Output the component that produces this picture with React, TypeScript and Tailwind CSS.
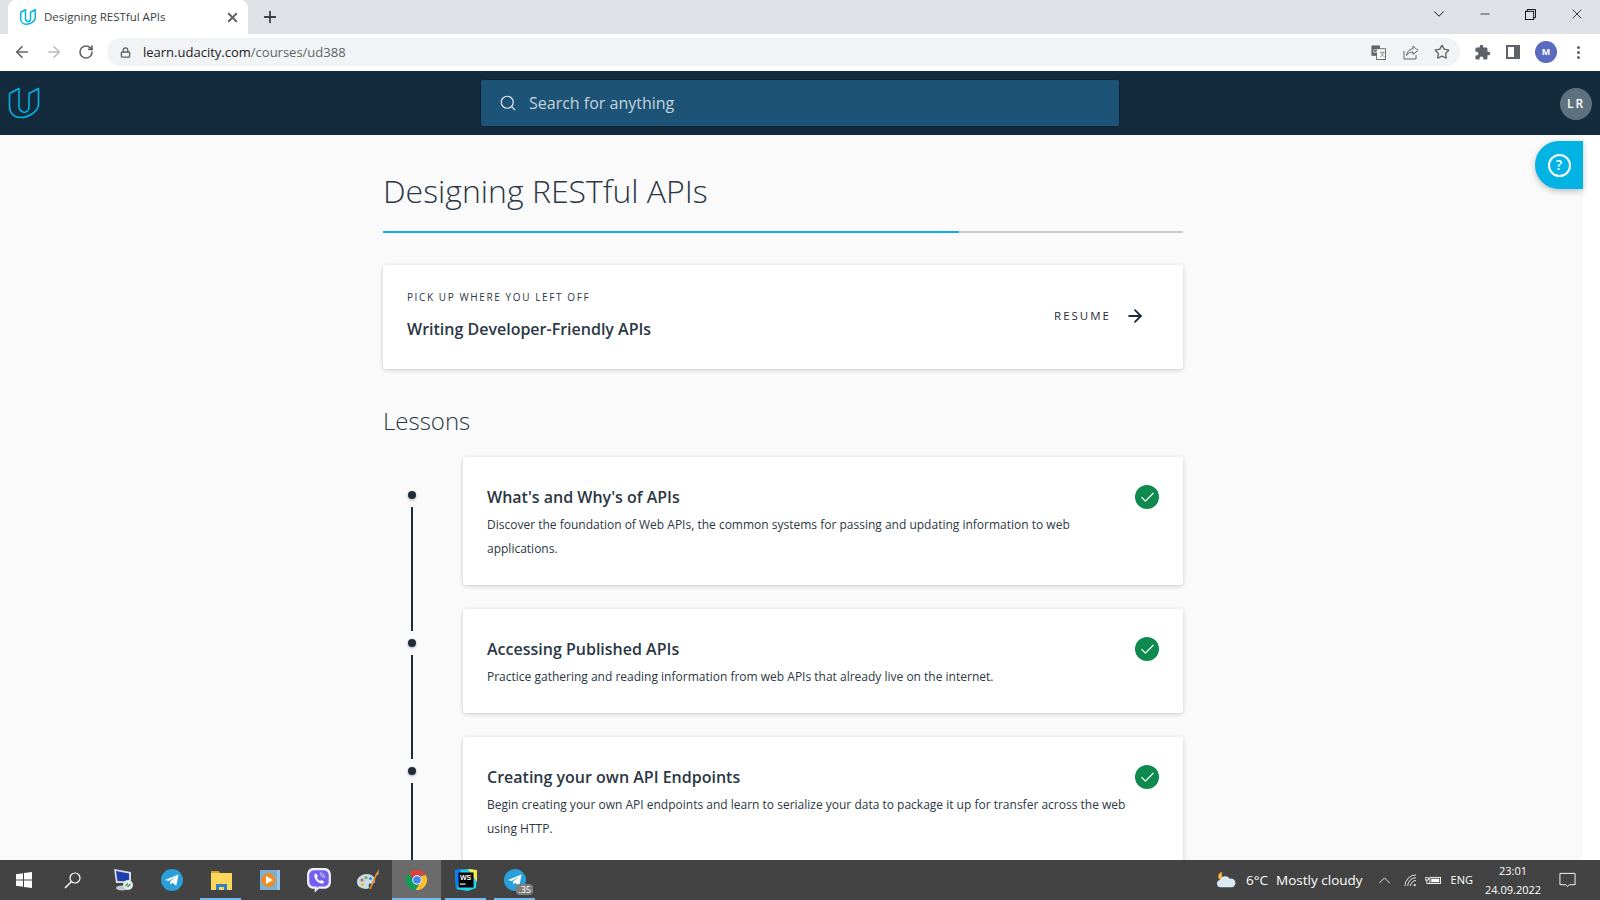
import { ArrowLeft, ArrowRight, Check, ChevronDown, Lock, Minus, Plus, RotateCw, Search, Star, X } from "lucide-react";
import type { ReactNode } from "react";

const lessons = [
  {
    title: "What's and Why's of APIs",
    text: "Discover the foundation of Web APIs, the common systems for passing and updating information to web applications.",
  },
  {
    title: "Accessing Published APIs",
    text: "Practice gathering and reading information from web APIs that already live on the internet.",
  },
  {
    title: "Creating your own API Endpoints",
    text: "Begin creating your own API endpoints and learn to serialize your data to package it up for transfer across the web using HTTP.",
  },
];

function UdacityLogo({ className, strokeWidth = 1.6 }: { className: string; strokeWidth?: number }) {
  return (
    <svg viewBox="0 0 32 32" fill="none" stroke="#02b3e4" strokeWidth={strokeWidth} strokeLinejoin="round" className={className}>
      <path d="M1.5 6.5 L11 1.5 V19 C11 22.5 13 24.5 16 25.5" />
      <path d="M1.5 6.5 V20 C1.5 26 6 30.5 12.5 30.5 C20 30.5 30.5 25 30.5 17 V1.5 L21 6.5 V20 C21 23 19 25 16 25.5" />
    </svg>
  );
}

function TelegramIcon({ className }: { className: string }) {
  return (
    <svg viewBox="0 0 24 24" className={className}>
      <circle cx="12" cy="12" r="11" fill="#2a9fd9" />
      <path d="M5 12 L18.5 6.5 L16.3 17.8 L12.3 14.8 L10.5 16.6 L10 13.5 L15.6 9 L8.6 13.1 Z" fill="#fff" />
    </svg>
  );
}

function TaskCell({ children, active, underline }: { children: ReactNode; active?: boolean; underline?: boolean }) {
  return (
    <div className={`relative flex h-10 w-[49px] items-center justify-center ${active ? "bg-[#6b6b6b]" : ""}`}>
      {children}
      {underline && <span className="absolute bottom-0 left-1 right-1 h-0.5 bg-[#76b9ed]" />}
      {active && <span className="absolute bottom-0 left-0 right-0 h-0.5 bg-[#76b9ed]" />}
    </div>
  );
}

function Tabstrip() {
  return (
    <div className="flex h-[34px] items-end bg-[#dee1e6] pl-2 text-[#3c4043]">
      <div className="flex h-[34px] w-[240px] items-center rounded-t-lg bg-white pl-[12px] pr-2">
        <UdacityLogo className="h-4 w-4" strokeWidth={3} />
        <span className="ml-[8px] flex-1 text-[11.5px]">Designing RESTful APIs</span>
        <X size={15} strokeWidth={3} className="text-[#5f6368]" />
      </div>
      <div className="ml-2 flex h-[34px] w-7 items-center justify-center">
        <Plus size={18} strokeWidth={2.4} />
      </div>
      <div className="ml-auto flex h-[34px] items-center pb-[6px] text-black">
        <ChevronDown size={18} strokeWidth={1.2} className="mr-[30px]" />
        <Minus size={14} strokeWidth={1.2} className="mr-[33px]" />
        <svg viewBox="0 0 12 12" fill="none" stroke="currentColor" className="mr-[33px] h-[11px] w-[11px]">
          <rect x="0.5" y="2.5" width="9" height="9" />
          <path d="M2.5 2.5 V0.5 H11.5 V9.5 H9.5" />
        </svg>
        <X size={16} strokeWidth={1.1} className="mr-[15px]" />
      </div>
    </div>
  );
}

function Toolbar() {
  return (
    <div className="flex h-[37px] items-center bg-white pb-px text-[#5f6368]">
      <ArrowLeft size={18} strokeWidth={2.2} className="ml-[13px]" />
      <ArrowRight size={18} strokeWidth={2.2} className="ml-[14px] text-[#babcbe]" />
      <RotateCw size={16} strokeWidth={2.4} className="ml-[15px]" />
      <div className="ml-[13px] flex h-7 w-[1353px] items-center rounded-full bg-[#f1f3f4]">
        <Lock size={11} strokeWidth={3} className="ml-[13px]" />
        <span className="ml-[12px] text-[13px] leading-none">
          <span className="text-[#202124]">learn.udacity.com</span>/courses/ud388
        </span>
        <div className="ml-auto flex items-center">
          <svg viewBox="0 0 16 16" className="h-[15px] w-[15px]">
            <rect x="0.5" y="0.5" width="9" height="11" fill="#5f6368" />
            <rect x="6" y="4" width="9.5" height="11.5" fill="#fff" stroke="#5f6368" />
            <text x="2" y="8" fontSize="6" fill="#fff" fontFamily="Liberation Sans, sans-serif">G</text>
            <text x="9" y="12" fontSize="6" fill="#5f6368" fontFamily="Noto Sans CJK SC, sans-serif">文</text>
          </svg>
          <svg viewBox="0 0 16 16" fill="none" stroke="#5f6368" strokeWidth="1" className="ml-[17px] h-4 w-4">
            <path d="M1 7 V15 H13 V11" />
            <path d="M10 2 L15 6.5 L10 10.5 V8 C7 8 5 9 3.5 11.5 C4 7.5 6.5 5 10 4.7 Z" />
          </svg>
          <Star size={16} strokeWidth={2} className="ml-[15px] mr-[10px]" />
        </div>
      </div>
      <svg viewBox="0 0 24 24" className="ml-[14px] h-[17px] w-[17px]" fill="#5f6368">
        <path d="M20.5 11H19V7c0-1.1-.9-2-2-2h-4V3.5a2.5 2.5 0 0 0-5 0V5H4c-1.1 0-2 .9-2 2v3.8h1.5a2.7 2.7 0 0 1 0 5.4H2V20c0 1.1.9 2 2 2h3.8v-1.5a2.7 2.7 0 0 1 5.4 0V22H17c1.1 0 2-.9 2-2v-4h1.5a2.5 2.5 0 0 0 0-5z" />
      </svg>
      <div className="ml-[15px] flex h-3.5 w-3.5 justify-start border-2 border-[#5f6368] bg-white">
        <span className="ml-auto h-full w-1 bg-[#5f6368]" />
      </div>
      <div className="ml-[15px] flex h-[22px] w-[22px] items-center justify-center rounded-full bg-[#5c6bc0] text-[9px] font-bold text-white">
        M
      </div>
      <div className="ml-[20px] flex flex-col gap-[2px]">
        <span className="h-[3px] w-[3px] rounded-full bg-[#5f6368]" />
        <span className="h-[3px] w-[3px] rounded-full bg-[#5f6368]" />
        <span className="h-[3px] w-[3px] rounded-full bg-[#5f6368]" />
      </div>
    </div>
  );
}

function Navbar() {
  return (
    <header className="relative flex h-[64px] items-center border-t border-[#0f2a3d] bg-[#142b3d]">
      <UdacityLogo className="mb-0.5 ml-2 h-[32px] w-[32px]" />
      <div className="mb-0.5 ml-[440px] flex h-12 w-[640px] items-center rounded-[3px] border border-[#0d2233] bg-[#1c5376] pl-[18px] text-white">
        <Search size={18} strokeWidth={1.6} className="text-[#dfe8ee]" />
        <span className="ml-[12px] text-base text-[#c5d3dc]">Search for anything</span>
      </div>
      <div className="ml-auto mr-2 flex h-8 w-8 items-center justify-center rounded-full bg-[#5f7180] text-xs font-semibold tracking-[2px] text-white">
        LR
      </div>
    </header>
  );
}

function LessonRow({ title, text, index, last }: { title: string; text: string; index: number; last: boolean }) {
  return (
    <div className="flex">
      <div className={`flex w-[80px] flex-col items-center pr-[22px] ${index === 0 ? "pt-[34px]" : "pt-[30px]"}`}>
        <span className="mb-1 h-2 w-2 shrink-0 rounded-full bg-[#1f2b38] shadow-[0_1px_3px_rgba(0,0,0,0.3)]" />
        <span className={`mt-1 w-0.5 flex-1 bg-[#1f2b38] ${last ? "min-h-[100px]" : "-mb-[46px]"}`} />
      </div>
      <div className="flex-1 rounded-[3px] bg-white pb-[24px] pl-6 pr-6 pt-[27px] shadow-[0_1px_4px_rgba(20,30,40,0.22)]">
        <div className="flex items-start justify-between">
          <h3 className="text-base font-semibold leading-[26px] text-[#2b3744]">{title}</h3>
          <span className="mt-px flex h-6 w-6 items-center justify-center rounded-full bg-[#0f8a4f]">
            <Check size={17} strokeWidth={1.6} className="text-white" />
          </span>
        </div>
        <p className="mt-[3px] w-[640px] text-xs leading-6 text-[#2b3744]">{text}</p>
      </div>
    </div>
  );
}

function Taskbar() {
  return (
    <footer className="flex h-10 shrink-0 items-center bg-[#434343] text-white">
      <div className="flex h-10 w-12 items-center justify-center">
        <svg viewBox="0 0 16 16" className="h-4 w-4" fill="#fff">
          <path d="M0 2.3 L7 1.3 V7.6 H0 Z M8 1.1 L16 0 V7.6 H8 Z M0 8.4 H7 V14.7 L0 13.7 Z M8 8.4 H16 V16 L8 14.9 Z" />
        </svg>
      </div>
      <div className="mr-0.5 flex h-10 w-12 items-center justify-center">
        <svg viewBox="0 0 17 17" fill="none" stroke="#fff" strokeWidth="1.2" className="h-[17px] w-[17px]">
          <circle cx="11" cy="6" r="5" />
          <path d="M7.5 9.5 L1 16" strokeWidth="1.5" />
        </svg>
      </div>
      <TaskCell>
        <svg viewBox="0 0 24 24" className="h-6 w-6">
          <path d="M3 1 L20 4 V15 L5 15 Z" fill="#d7dde3" />
          <path d="M5 3 L18 5.5 V13.5 L6.5 13 Z" fill="#1e3fb0" />
          <ellipse cx="11" cy="20" rx="6" ry="2.5" fill="#c4c8cc" />
          <circle cx="17" cy="17" r="5" fill="#e8ecee" />
          <path d="M14.5 18 L17 15.5 M16.5 19 L19.5 16" stroke="#2a9a3a" strokeWidth="1.2" />
        </svg>
      </TaskCell>
      <TaskCell>
        <TelegramIcon className="h-6 w-6" />
      </TaskCell>
      <TaskCell underline>
        <svg viewBox="0 0 24 24" className="h-6 w-6">
          <path d="M2 3 H10 L11 5 H2 Z" fill="#d9a520" />
          <rect x="2" y="5" width="21" height="17" fill="#fbd75b" />
          <path d="M7 22 V16 H18 V22 H15 V19 H10 V22 Z" fill="#2f80c8" />
        </svg>
      </TaskCell>
      <TaskCell>
        <svg viewBox="0 0 24 24" className="h-6 w-6">
          <rect x="2" y="2" width="20" height="20" fill="#7db1d3" />
          <rect x="19" y="2" width="3" height="20" fill="#9cc6e0" />
          <circle cx="10.5" cy="12" r="7" fill="#f08a24" />
          <path d="M8 8 L15 12 L8 16 Z" fill="#fff" />
        </svg>
      </TaskCell>
      <TaskCell>
        <svg viewBox="0 0 24 24" className="h-[26px] w-[26px]">
          <path d="M7 1 H17 C20.5 1 23 3.5 23 7 V14 C23 17.5 20.5 20 17 20 H12 L8 23.5 V20 H7 C3.5 20 1 17.5 1 14 V7 C1 3.5 3.5 1 7 1 Z" fill="#f2eefb" />
          <path d="M7.5 3 H16.5 C19 3 21 5 21 7.5 V13.5 C21 16 19 18 16.5 18 H11.5 L10 19.5 V18 H7.5 C5 18 3 16 3 13.5 V7.5 C3 5 5 3 7.5 3 Z" fill="#7360f2" />
          <path d="M8 6.5 L9.5 6 L11 8.5 L10 9.8 C10.5 11 11.5 12.2 13 13 L14.3 12 L16.8 13.5 L16 15 C14 15.8 11 14.5 9.3 12.3 C7.8 10.3 7.3 8 8 6.5 Z" fill="#fff" />
          <path d="M13 5.5 C15.5 5.7 17.2 7.5 17.3 10 M13 7.3 C14.5 7.5 15.4 8.4 15.5 10" stroke="#fff" strokeWidth="0.7" fill="none" />
        </svg>
      </TaskCell>
      <TaskCell>
        <svg viewBox="0 0 24 24" className="h-6 w-6">
          <path d="M1 14 C1 9 6 6 11 6 C16 6 19 9 19 13 C19 16 16 16 14.5 15.5 C12.5 15 12.5 18 13 19 C13.5 21 10 21.5 7 20.5 C3.5 19.5 1 17.5 1 14 Z" fill="#c5dcea" />
          <circle cx="6" cy="12" r="1.6" fill="#e2574c" />
          <circle cx="10" cy="9.5" r="1.6" fill="#5cb85c" />
          <circle cx="14.5" cy="10.5" r="1.5" fill="#3f8fd2" />
          <circle cx="6.5" cy="16.5" r="1.6" fill="#f1c40f" />
          <path d="M14 21 L21 5" stroke="#e8862a" strokeWidth="1.8" />
          <path d="M20 6 L23 1 L22.5 7 Z" fill="#c9a36a" />
        </svg>
      </TaskCell>
      <TaskCell active>
        <svg viewBox="0 0 24 24" className="h-[22px] w-[22px]">
          <path d="M12 1 A11 11 0 0 1 21.5 6.5 H12 A5.5 5.5 0 0 0 6.8 10.2 L3 4 A11 11 0 0 1 12 1 Z" fill="#db4437" />
          <path d="M3 4 L7.8 12.5 A5.5 5.5 0 0 0 13.5 17.3 L10.5 22.9 A11 11 0 0 1 3 4 Z" fill="#0f9d58" />
          <path d="M21.5 6.5 A11 11 0 0 1 10.5 22.9 L15.5 15 A5.5 5.5 0 0 0 16 8 Z" fill="#fbc02d" />
          <circle cx="12" cy="12" r="5.2" fill="#fff" />
          <circle cx="12" cy="12" r="4.2" fill="#4285f4" />
        </svg>
      </TaskCell>
      <TaskCell underline>
        <svg viewBox="0 0 24 24" className="h-6 w-6">
          <path d="M1 2 L18 1 L23 6 L22 20 L14 23 L2 21 Z" fill="#21d4f0" />
          <path d="M14 1 L23 2 L23 14 Z" fill="#f3ec50" />
          <path d="M1 2 L7 1 L3 21 L2 21 Z" fill="#087cfa" />
          <rect x="4.5" y="4.5" width="15" height="15" fill="#000" />
          <text x="6" y="11.5" fontSize="7" fontWeight="700" fill="#fff" fontFamily="Liberation Sans, sans-serif">WS</text>
          <rect x="6" y="15.5" width="5.5" height="1.2" fill="#fff" />
        </svg>
      </TaskCell>
      <TaskCell underline>
        <TelegramIcon className="h-6 w-6" />
        <span className="absolute bottom-[5px] right-[6px] rounded-sm bg-[#7d7d7d] px-[2px] text-[9px] leading-[11px] text-white">.35</span>
      </TaskCell>
      <div className="ml-auto flex items-center">
        <svg viewBox="0 0 24 20" className="h-[18px] w-[22px]">
          <path d="M8 1 A5 5 0 1 0 13 8 A4.5 4.5 0 0 1 8 1 Z" fill="#f6b73c" />
          <path d="M6 18 A4 4 0 0 1 6 10 A5.5 5.5 0 0 1 16 8.5 A4.8 4.8 0 0 1 19 18 Z" fill="#dbe9f4" />
        </svg>
        <span className="ml-[9px] pt-px text-[13.5px]">6°C</span>
        <span className="ml-2 pt-px text-[13.5px]">Mostly cloudy</span>
        <svg viewBox="0 0 14 8" fill="none" stroke="#fff" strokeWidth="1" className="ml-[15px] h-[7px] w-[13px]">
          <path d="M1 7 L7 1 L13 7" />
        </svg>
        <svg viewBox="0 0 14 14" fill="none" stroke="#eee" strokeWidth="1" className="ml-[13px] h-[13px] w-[13px]">
          <path d="M1 13 A12 12 0 0 1 13 1 M4 13 A9 9 0 0 1 13 4 M7 13 A6 6 0 0 1 13 7" />
          <circle cx="11.5" cy="12" r="1.2" fill="#eee" stroke="none" />
        </svg>
        <svg viewBox="0 0 18 12" fill="none" stroke="#fff" strokeWidth="1" className="ml-2 h-[12px] w-[16px]">
          <rect x="5.5" y="3" width="12" height="7" />
          <rect x="7" y="4.5" width="9" height="4" fill="#fff" stroke="none" />
          <path d="M0 3.5 H4 V6 H0 Z M2 6 V10 H6" />
        </svg>
        <span className="ml-[10px] text-[11px]">ENG</span>
        <div className="ml-[12px] flex w-[56px] flex-col items-center text-[11px] leading-[19px]">
          <span>23:01</span>
          <span>24.09.2022</span>
        </div>
        <svg viewBox="0 0 18 16" fill="none" stroke="#fff" strokeWidth="1" className="ml-[18px] mr-[24px] h-4 w-[17px]">
          <path d="M1 1 H17 V13 H11 L9 15 L7 13 H1 Z" />
        </svg>
      </div>
    </footer>
  );
}

export default function App() {
  return (
    <div className="flex h-[900px] flex-col overflow-hidden bg-white font-['Open_Sans',sans-serif]">
      <Tabstrip />
      <Toolbar />
      <Navbar />
      <div className="relative flex min-h-0 flex-1 overflow-hidden">
        <main className="w-[1583px] bg-[#fafafa] pl-[383px]">
          <div className="w-[800px]">
            <h1 className="mt-[34px] text-[32px] font-light leading-[44px] text-[#2b3744]">Designing RESTful APIs</h1>
            <div className="mt-[18px] flex h-0.5 bg-[#c8cdd2]">
              <span className="h-full w-[576px] bg-[#02b3e4]" />
            </div>
            <section className="mt-8 flex h-[104px] items-center justify-between rounded-[3px] bg-white pl-6 pr-[38px] shadow-[0_1px_4px_rgba(20,30,40,0.22)]">
              <div className="pb-[5px]">
                <p className="text-[10px] font-medium uppercase leading-4 tracking-[1.6px] text-[#2b3744]">Pick up where you left off</p>
                <p className="mt-3 text-base font-semibold leading-6 text-[#2b3744]">Writing Developer-Friendly APIs</p>
              </div>
              <div className="flex items-center pb-[2px] text-[#1f2b38]">
                <span className="text-[11.5px] font-medium uppercase tracking-[2px]">Resume</span>
                <ArrowRight size={20} strokeWidth={2.2} className="ml-[14px]" />
              </div>
            </section>
            <h2 className="mt-9 text-2xl font-light leading-8 text-[#2b3744]">Lessons</h2>
            <div className="mt-[20px] flex flex-col gap-6">
              {lessons.map((l, i) => (
                <LessonRow key={l.title} title={l.title} text={l.text} index={i} last={i === lessons.length - 1} />
              ))}
            </div>
          </div>
        </main>
        <button className="absolute right-[17px] top-[6px] flex h-12 w-12 items-center justify-center rounded-l-[24px] rounded-r-none bg-[#02b3e4] shadow-[0_2px_6px_rgba(0,0,0,0.25)]">
          <span className="flex h-[23px] w-[23px] items-center justify-center rounded-full border-2 border-white text-sm font-semibold leading-none text-white">?</span>
        </button>
      </div>
      <Taskbar />
    </div>
  );
}
